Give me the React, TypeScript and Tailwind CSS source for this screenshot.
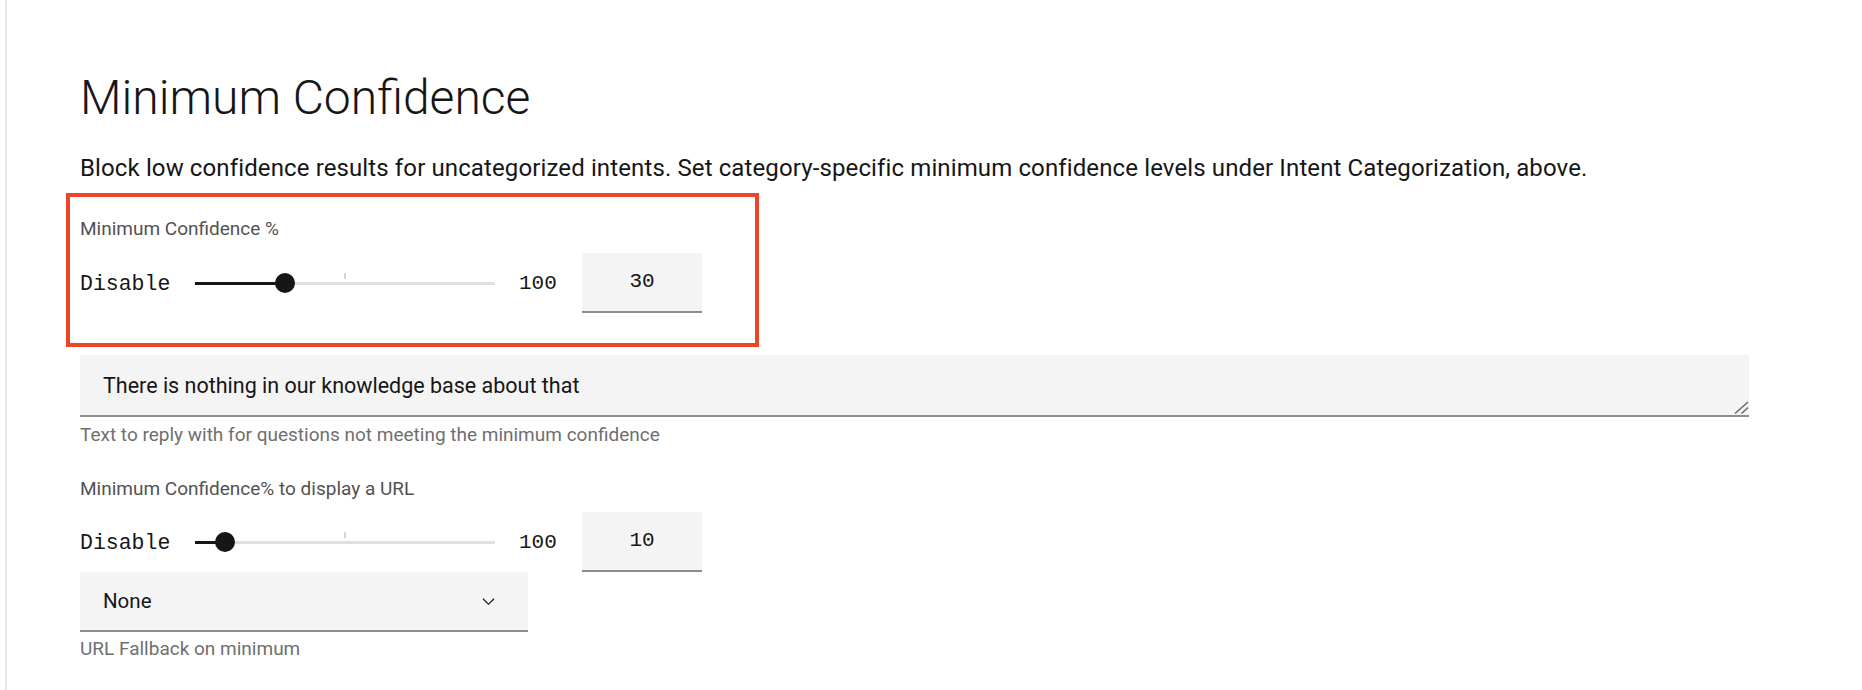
const sans = "font-['Roboto','Liberation_Sans',sans-serif]";
const mono = "font-['Liberation_Mono','DejaVu_Sans_Mono',monospace]";

function ConfidenceSlider({ value }: { value: number }) {
  return (
    <div className="flex items-center h-[60px]">
      <span className={`${mono} w-[115px] text-[21.5px] text-[#161616] pt-[2px]`}>Disable</span>
      <div className="relative w-[300px] h-[20px] flex items-center">
        <div className="w-full h-[3px] bg-[#e0e0e0]" />
        <div className="absolute left-[149px] top-[0px] w-[2px] h-[6px] bg-[#d4d4d4]" />
        <div className="absolute left-0 h-[3px] bg-[#161616]" style={{ width: `${value}%` }} />
        <div
          className="absolute w-[20px] h-[20px] rounded-full bg-[#161616] -translate-x-1/2"
          style={{ left: `${value}%` }}
        />
      </div>
      <span className={`${mono} ml-[24px] w-[37px] text-[21px] text-[#161616] pt-[2px]`}>100</span>
      <div className={`${mono} ml-[26px] w-[120px] h-[60px] bg-[#f4f4f4] border-b-2 border-[#8d8d8d] flex items-center justify-center text-[21px] text-[#161616]`}>
        {value}
      </div>
    </div>
  );
}

function ChevronDown() {
  return (
    <svg width="19" height="19" viewBox="0 0 16 16" fill="#161616">
      <path d="M8 11L3 6 3.7 5.3 8 9.6 12.3 5.3 13 6z" />
    </svg>
  );
}

export default function App() {
  return (
    <div className={`${sans} h-[690px] bg-white pl-[5px]`}>
      <div className="h-full border-l-2 border-[#e8e8e8] pl-[73px] pr-[113px] pt-[70px]">
        <h1 className="text-[48px] leading-[56px] font-light text-[#161616]">Minimum Confidence</h1>
        <p className="mt-[26px] text-[24px] leading-[32px] tracking-[0.12px] text-[#161616]">
          Block low confidence results for uncategorized intents. Set category-specific minimum confidence levels under Intent Categorization, above.
        </p>

        <div className="mt-[9px] -ml-[14px] w-[693px] border-4 border-[#ec4429] pl-[10px] pt-[20px] pb-[30px]">
          <div className="text-[19px] leading-[24px] text-[#525252]">Minimum Confidence %</div>
          <div className="mt-[12px]">
            <ConfidenceSlider value={30} />
          </div>
        </div>

        <div className="relative mt-[8px]">
          <textarea
            readOnly
            rows={1}
            value="There is nothing in our knowledge base about that"
            className="block w-full h-[62px] resize-none bg-[#f4f4f4] border-b-2 border-[#8d8d8d] pl-[23px] pt-[17px] text-[21.5px] leading-[28px] text-[#161616] outline-none"
          />
          <svg className="absolute right-0 bottom-[3px]" width="15" height="13" viewBox="0 0 15 13">
            <path d="M1 12.5L14 1M7.5 12.5L14 6.5" stroke="#6f6f6f" strokeWidth="1.6" fill="none" />
          </svg>
        </div>
        <div className="mt-[6px] text-[19px] leading-[24px] text-[#6f6f6f]">
          Text to reply with for questions not meeting the minimum confidence
        </div>

        <div className="mt-[30px] text-[19px] leading-[24px] text-[#525252]">Minimum Confidence% to display a URL</div>
        <div className="mt-[11px]">
          <ConfidenceSlider value={10} />
        </div>
        <div className="w-[448px] h-[60px] bg-[#f4f4f4] border-b-2 border-[#8d8d8d] flex items-center justify-between pl-[23px] pr-[30px]">
          <span className="text-[20.5px] text-[#161616]">None</span>
          <ChevronDown />
        </div>
        <div className="mt-[5px] text-[19px] leading-[24px] text-[#6f6f6f]">URL Fallback on minimum</div>
      </div>
    </div>
  );
}
